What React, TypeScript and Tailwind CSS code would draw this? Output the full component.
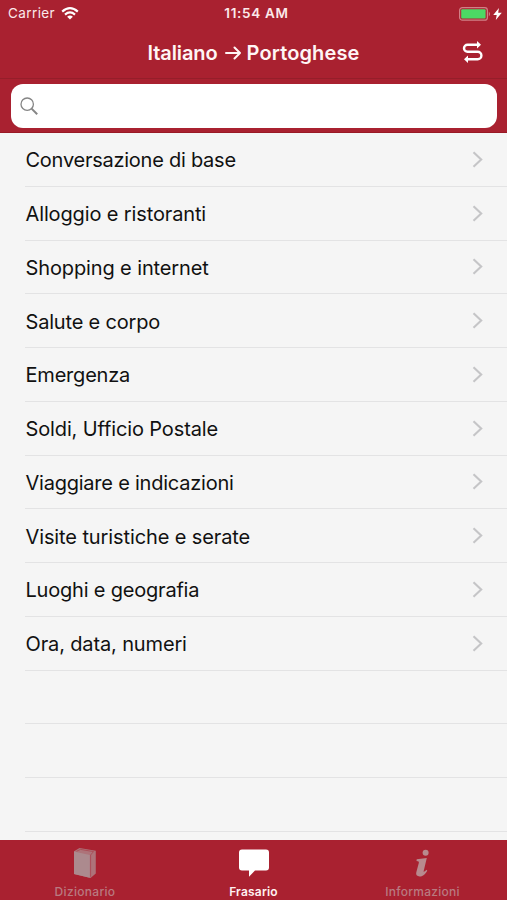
const rows = [
  { label: "Conversazione di base", spacing: "tracking-[-0.25px]" },
  { label: "Alloggio e ristoranti", spacing: "tracking-[-0.13px]" },
  { label: "Shopping e internet", spacing: "tracking-[-0.12px]" },
  { label: "Salute e corpo", spacing: "tracking-[-0.18px]" },
  { label: "Emergenza", spacing: "tracking-[-0.2px]" },
  { label: "Soldi, Ufficio Postale", spacing: "tracking-[-0.13px]" },
  { label: "Viaggiare e indicazioni", spacing: "tracking-[-0.23px]" },
  { label: "Visite turistiche e serate", spacing: "tracking-[-0.11px]" },
  { label: "Luoghi e geografia", spacing: "tracking-[-0.2px]" },
  { label: "Ora, data, numeri", spacing: "tracking-[-0.14px]" },
  { label: "", spacing: "" },
  { label: "", spacing: "" },
  { label: "", spacing: "" },
];

function StatusBar() {
  return (
    <div className="grid h-[27px] grid-cols-[1fr_auto_1fr] items-center pl-2 pr-[5px] text-[13px] leading-none text-[#fbe9ea]">
      <div className="flex items-center gap-[6px]">
        <span className="pt-px text-[13.5px] tracking-[0.4px]">Carrier</span>
        <svg width="18" height="13" viewBox="0 0 18 13" fill="none" stroke="#fff" strokeWidth="2.2">
          <path d="M1.2 4.6Q9-2.3 16.8 4.6M4 7.6Q9 3.3 14 7.6" />
          <path d="M9 12.5 6.1 9.7Q9 7.5 11.9 9.7Z" fill="#fff" stroke="none" />
        </svg>
      </div>
      <span className="ml-[3px] pt-px text-[13.5px] font-semibold tracking-[0.7px]">11:54 AM</span>
      <div className="flex items-center justify-end gap-[2px]">
        <svg width="32" height="14" viewBox="0 0 32 14">
          <rect x="0.6" y="0.6" width="27.8" height="12.6" rx="2.8" fill="none" stroke="#d18187" strokeWidth="1.2" />
          <rect x="2.2" y="2.2" width="24.4" height="9.4" rx="1" fill="#4cd964" />
          <path d="M29.8 4.5q2.4 2.5 0 5z" fill="#d18187" />
        </svg>
        <svg width="9" height="12" viewBox="0 0 8 12" fill="#fff" preserveAspectRatio="none">
          <path d="M5.3 0 .2 6.9h3.1L2.5 12 7.8 4.8H4.6z" />
        </svg>
      </div>
    </div>
  );
}

function NavBar() {
  return (
    <div className="grid h-[51px] grid-cols-[1fr_auto_1fr] items-center pr-[23px]">
      <span />
      <h1 className="ml-[23px] flex items-center text-[20px] font-semibold leading-none text-[#fff5f5]">
        <span className="tracking-[-0.1px]">Italiano</span>
        <svg className="ml-[7px] mr-[6px]" width="16" height="14" viewBox="0 0 16 14" fill="none" stroke="#fff5f5" strokeWidth="2" strokeLinecap="round" strokeLinejoin="round">
          <path d="M1 7h14M9.5 1.5 15 7l-5.5 5.5" />
        </svg>
        <span className="tracking-[0.12px]">Portoghese</span>
      </h1>
      <svg className="mb-px justify-self-end" width="22" height="22" viewBox="0 0 22 22" fill="none" stroke="#fff" strokeWidth="2.4">
        <path d="M15.5 3.8H5.5a3.5 3.5 0 0 0 0 7h10.2a3.7 3.7 0 0 1 0 7.4H5" />
        <path d="M15 0 19 3.8l-4 3.8zM6 14.4 2 18.2 6 22z" fill="#fff" stroke="none" />
      </svg>
    </div>
  );
}

function BookIcon() {
  return (
    <svg width="24" height="32" viewBox="0 0 24 32">
      <path d="M1 4.2 6.5 1 22.8 3.8v22.7L17.5 31 1 27z" fill="#ad7379" />
      <path d="M1 4.6 16.8 8v22.8L1 27z" fill="#ac8a8e" />
      <path d="M3.5 4.3 7.5 2.4 20.5 4.6 17.6 8V29.8" fill="none" stroke="#a94650" strokeWidth="0.8" />
    </svg>
  );
}

function TabBar() {
  return (
    <nav className="grid h-[60px] shrink-0 grid-cols-3 bg-[#a92130] text-[12px] font-medium leading-none text-[#b97a80]">
      <div className="flex flex-col items-center">
        <div className="mt-[7px] h-8"><BookIcon /></div>
        <span className="ml-px mt-[7px] tracking-[0.3px]">Dizionario</span>
      </div>
      <div className="flex flex-col items-center text-[#fff1f1]">
        <svg className="mt-[7px]" width="32" height="32" viewBox="0 0 32 32" fill="#fff">
          <path d="M4 2.5h24a3 3 0 0 1 3 3v15a3 3 0 0 1-3 3H17l-6 6.2v-6.2H4a3 3 0 0 1-3-3v-15a3 3 0 0 1 3-3z" />
        </svg>
        <span className="mt-[7px] font-semibold tracking-[0.2px]">Frasario</span>
      </div>
      <div className="flex flex-col items-center">
        <svg className="mt-[7px]" width="16" height="32" viewBox="0 0 16 32" fill="#b88a8e">
          <circle cx="10.6" cy="5.7" r="3" />
          <path d="M1.7 12.2 11.8 11 8.7 23.9c-.4 1.4.5 1.2 2.7-1.1l.9.9C9.6 27.9 7.5 29.4 4.7 29.4c-2.8 0-4.1-1.6-3.4-4.1l2.5-9.4c.3-1.4-.3-1.7-2.3-1.8z" />
        </svg>
        <span className="mt-[7px] tracking-[0.25px]">Informazioni</span>
      </div>
    </nav>
  );
}

export default function App() {
  return (
    <main className="flex h-[900px] w-[507px] flex-col overflow-hidden bg-[#f5f5f5] font-['Inter',sans-serif]">
      <header className="h-[133px] shrink-0 border-b border-[#991925] bg-[#a92130]">
        <StatusBar />
        <NavBar />
        <div className="border-t border-[#951e2a] pl-[11px] pr-[10px] pt-[5px]">
          <div className="flex h-11 items-center rounded-[12px] bg-white pl-[9px]">
            <svg width="19" height="19" viewBox="0 0 19 19" fill="none" stroke="#858585">
              <circle cx="7.2" cy="7.2" r="6.2" strokeWidth="1.3" />
              <path d="m11.6 11.6 5.6 5.6" strokeWidth="2" />
            </svg>
          </div>
        </div>
      </header>
      <section className="min-h-0 flex-1 overflow-hidden pl-[25px]">
        {rows.map(({ label, spacing }, i) => (
          <div key={i} className="flex h-[53.75px] items-center justify-between border-b border-[#e3e3e4] pr-[24px]">
            <span className={`whitespace-nowrap pl-[0.5px] pt-[2px] text-[20px] leading-none text-[#111] ${spacing}`}>{label}</span>
            {label && (
              <svg width="11" height="17" viewBox="0 0 11 17" fill="none" stroke="#c5c5c7" strokeWidth="2.1">
                <path d="m1.5 1.2 7.7 7.3-7.7 7.3" />
              </svg>
            )}
          </div>
        ))}
      </section>
      <TabBar />
    </main>
  );
}
